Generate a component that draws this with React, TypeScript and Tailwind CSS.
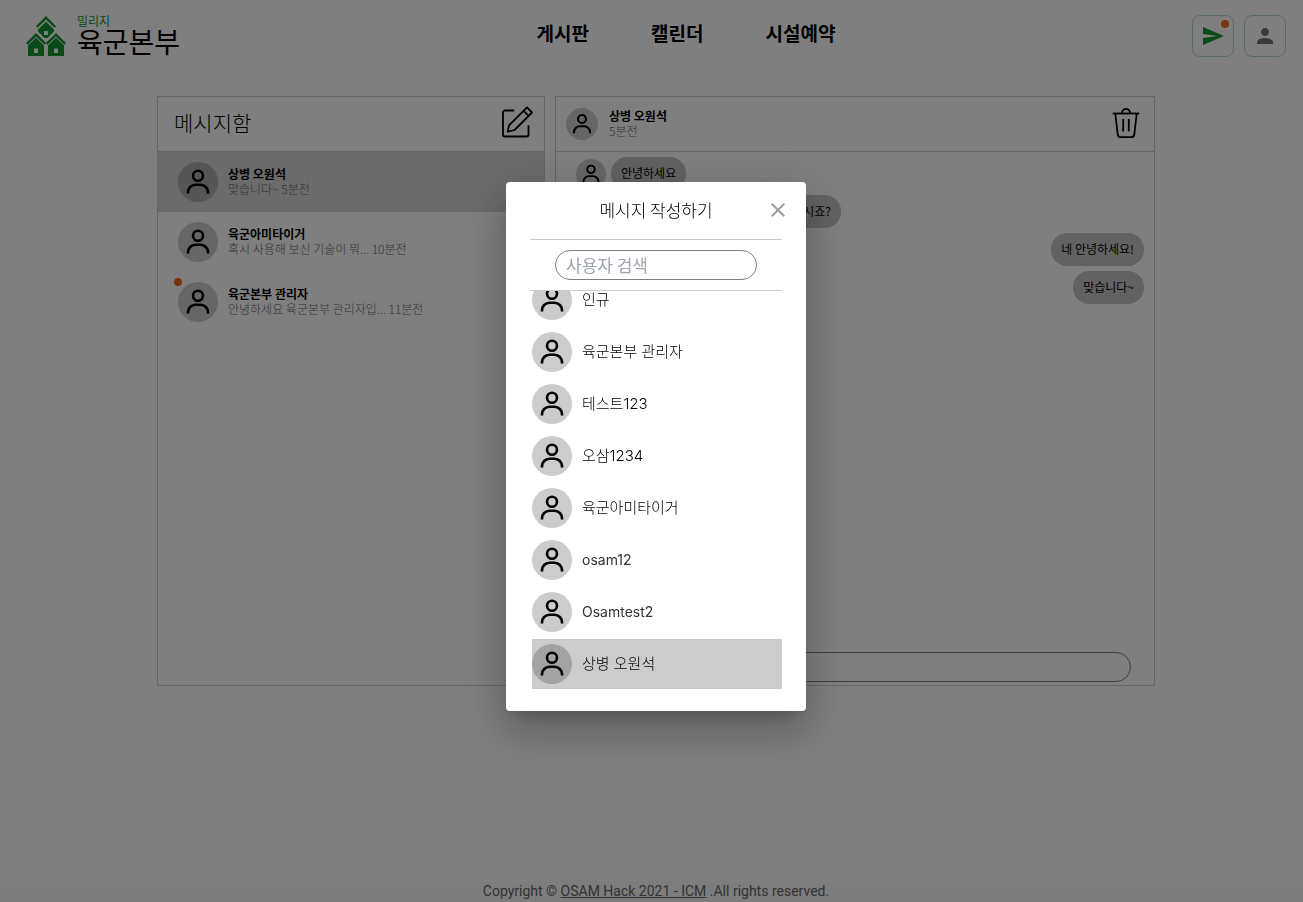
import { useState } from "react";
import { MdClose, MdPerson, MdSend } from "react-icons/md";

const conversations = [
  { name: "상병 오원석", preview: "맞습니다~ 5분전", selected: true, unread: false },
  { name: "육군아미타이거", preview: "혹시 사용해 보신 기술이 뭐... 10분전", selected: false, unread: false },
  { name: "육군본부 관리자", preview: "안녕하세요 육군본부 관리자입... 11분전", selected: false, unread: true },
];

const users = [
  { name: "인규", latin: false },
  { name: "육군본부 관리자", latin: false },
  { name: "테스트123", latin: false },
  { name: "오삼1234", latin: false },
  { name: "육군아미타이거", latin: false },
  { name: "osam12", latin: true },
  { name: "Osamtest2", latin: true },
  { name: "상병 오원석", latin: false },
];

function Avatar({ size = "size-10" }: { size?: string }) {
  return (
    <span className={`block shrink-0 rounded-full bg-black/20 ${size}`}>
      <svg viewBox="0 0 40 40" fill="none" stroke="#000" strokeWidth="2.6" className="size-full" aria-hidden="true">
        <circle cx="20" cy="13.800" r="5" />
        <path d="M10 31.500v-1.200c0-4.200 3.300-7.500 7.500-7.500h5c4.200 0 7.500 3.300 7.500 7.500v1.200" />
      </svg>
    </span>
  );
}

function HousesLogo() {
  return (
    <svg viewBox="0 0 40 41" className="h-[41px] w-10 shrink-0" fill="#149430" aria-hidden="true">
      <g fill="none" stroke="#149430" strokeWidth="2.4">
        <path d="M10.700 12 20 2.800l9.300 9.200" />
        <path d="M.9 28.800 10 19.600l9.300 9.200" />
        <path d="M20.700 28.800 30 19.600l9.100 9.200" />
      </g>
      <path fillRule="evenodd" d="M20 6.800l8 7.700v2L21.500 23h-3L12 16.500v-2zM18 16v4h4v-4z" />
      <path fillRule="evenodd" d="M10 22.500l8 8V41H2V30.500zM8 33.500V38h4v-4.500z" />
      <path fillRule="evenodd" d="M30 22.500l8 8V41H22V30.500zM28 33.500V38h4v-4.500z" />
    </svg>
  );
}

function EditIcon() {
  return (
    <svg viewBox="0 0 32 32" className="size-8" fill="none" stroke="#000" strokeWidth="1.8" strokeLinejoin="round" aria-hidden="true">
      <path d="M13.200 4.500H4a2 2 0 0 0-2 2v22a2 2 0 0 0 2 2h21.500a2 2 0 0 0 2-2v-9.300" />
      <path d="M26 1.400 31 6.500 13.600 24 6.800 25.700 8 19.400z" />
      <path d="M22.600 4.800l5 5.100" />
    </svg>
  );
}

function TrashIcon() {
  return (
    <svg viewBox="0 0 32 32" className="size-8" fill="none" stroke="#000" strokeWidth="1.8" strokeLinejoin="round" aria-hidden="true">
      <path d="M2.700 6.500h26.600" />
      <path d="M12 6.500V6a4 4 0 0 1 8 0v.5" />
      <path d="M5.300 6.500 7.700 27.500a3.200 3.200 0 0 0 3 2.700h10.600a3.200 3.200 0 0 0 3-2.700L26.700 6.500" />
      <path d="M13.200 12v12.500M18.800 12v12.500" />
    </svg>
  );
}

export default function App() {
  const [query, setQuery] = useState("");
  const [draft, setDraft] = useState("");

  return (
    <div className="flex min-h-screen flex-col bg-white font-['Noto_Sans_CJK_KR',sans-serif] text-black">
      <header className="flex items-start justify-between pt-[15px] pr-[17px] pl-[26px]">
        <a href="#home" className="flex gap-[11px]">
          <HousesLogo />
          <span className="flex flex-col">
            <span className="text-xs leading-3 font-normal text-[#149430]">밀리지</span>
            <span className="text-[28px] leading-7 font-normal">육군본부</span>
          </span>
        </a>
        <nav className="flex gap-[62px] pt-1.5 text-[19px] leading-6 font-bold">
          <a href="#board">게시판</a>
          <a href="#calendar">캘린더</a>
          <a href="#reservation">시설예약</a>
        </nav>
        <div className="flex gap-2.5">
          <button type="button" aria-label="메시지" className="relative flex size-[42px] items-center justify-center rounded-lg border border-[#b5d6c8]">
            <MdSend size={24} color="#149430" />
            <span className="absolute top-1 right-1 size-2 rounded-full bg-[#ea6a12]" />
          </button>
          <button type="button" aria-label="내 정보" className="flex size-[42px] items-center justify-center rounded-lg border border-[#b5d6c8]">
            <MdPerson size={24} color="#757575" />
          </button>
        </div>
      </header>

      <main className="flex flex-1 justify-center pt-[39px] pl-[9px]">
        <div className="flex h-[590px] w-full max-w-[998px] gap-2.5">
          <section className="w-[388px] border border-[#ccc]">
            <div className="flex h-[55px] items-center justify-between border-b border-[#ccc] pr-[11px] pb-1 pl-4">
              <h1 className="text-[21px] leading-7 font-light">메시지함</h1>
              <button type="button" aria-label="메시지 작성">
                <EditIcon />
              </button>
            </div>
            <ul>
              {conversations.map((c) => (
                <li key={c.name} className={c.selected ? "bg-[#d6d6d6]" : ""}>
                  <a href="#chat" className="flex h-[60px] items-center gap-2.5 px-5">
                    <span className="relative">
                      <Avatar />
                      {c.unread && <span className="absolute -top-1 -left-1 size-2 rounded-full bg-[#ea6a12]" />}
                    </span>
                    <span className="flex flex-col pb-0.5 text-xs leading-[15px]">
                      <span className="font-bold">{c.name}</span>
                      <span className="font-light text-[#666]">{c.preview}</span>
                    </span>
                  </a>
                </li>
              ))}
            </ul>
          </section>

          <section className="flex flex-1 flex-col border border-[#ccc]">
            <div className="flex h-[55px] items-center justify-between border-b border-[#ccc] pr-3 pl-2.5">
              <div className="flex items-center gap-[11px]">
                <Avatar size="size-8" />
                <div className="flex flex-col pb-0.5 text-xs leading-[15px]">
                  <span className="font-bold">상병 오원석</span>
                  <span className="font-light text-[#666]">5분전</span>
                </div>
              </div>
              <button type="button" aria-label="대화 삭제" className="pb-0.5">
                <TrashIcon />
              </button>
            </div>
            <div className="flex flex-1 flex-col gap-[5px] pt-[5px] pr-2.5 pl-5 text-xs leading-[31px]">
              <div className="flex items-center gap-[5px]">
                <Avatar size="size-[30px]" />
                <p className="rounded-2xl bg-[#c4c4c4] px-2.5 pb-0.5">안녕하세요</p>
              </div>
              <p className="ml-[35px] w-[230px] self-start rounded-2xl bg-[#c4c4c4] px-2.5 pb-0.5 text-right">상병 오원석님 맞으시죠?</p>
              <p className="self-end rounded-2xl bg-[#c4c4c4] px-2.5 pb-0.5">네 안녕하세요!</p>
              <p className="self-end rounded-2xl bg-[#c4c4c4] px-2.5 pb-0.5">맞습니다~</p>
            </div>
            <div className="px-[23px] pb-[3px]">
              <input
                aria-label="메시지 입력"
                value={draft}
                onChange={(e) => setDraft(e.target.value)}
                className="block h-[30px] w-full rounded-full border border-[#808080] px-3 text-sm outline-none"
              />
            </div>
          </section>
        </div>
      </main>

      <footer className="bg-[#fafafa] pb-0.5 text-center font-[Roboto,sans-serif] text-sm leading-[18px] text-[#666]">
        <p className="pl-[9px]">
          Copyright ©{" "}
          <a href="#osam" className="underline">
            OSAM Hack 2021 - ICM
          </a>{" "}
          .All rights reserved.
        </p>
      </footer>

      <div className="fixed inset-0 flex items-center justify-center bg-black/50 pb-[9px] pl-[9px]">
        <div
          role="dialog"
          aria-modal="true"
          aria-labelledby="compose-title"
          className="w-[300px] rounded bg-white px-6 pb-[22px] shadow-[0_11px_15px_-7px_rgba(0,0,0,0.2),0_24px_38px_3px_rgba(0,0,0,0.14),0_9px_46px_8px_rgba(0,0,0,0.12)]"
        >
          <div className="relative flex h-[57px] items-center justify-center pb-0.5">
            <h2 id="compose-title" className="text-[17px] leading-6 font-light">
              메시지 작성하기
            </h2>
            <button type="button" aria-label="닫기" className="absolute top-4 -right-2">
              <MdClose size={24} color="#9e9e9e" />
            </button>
          </div>
          <div className="flex justify-center border-y border-[#ccc] py-2.5">
            <input
              type="text"
              aria-label="사용자 검색"
              placeholder="사용자 검색"
              value={query}
              onChange={(e) => setQuery(e.target.value)}
              className="h-[30px] w-[202px] rounded-full border border-[#808080] px-2.5 pb-0.5 text-[17px] font-normal outline-none placeholder:text-[#9ca3af]"
            />
          </div>
          <div className="flex h-[398px] flex-col-reverse overflow-y-auto pl-0.5 [scrollbar-width:none]">
            <ul className="flex flex-col gap-0.5">
              {users.map((user, i) => (
                <li key={user.name} className={i === users.length - 1 ? "bg-[#ccc]" : ""}>
                  <button type="button" className="flex h-[50px] w-full items-center gap-2.5 text-left font-[Inter,'Noto_Sans_CJK_KR',sans-serif] leading-5 text-[#333]">
                    <Avatar />
                    <span className={user.latin ? "text-sm font-normal" : "text-[15px] font-light text-black"}>{user.name}</span>
                  </button>
                </li>
              ))}
            </ul>
          </div>
        </div>
      </div>
    </div>
  );
}
